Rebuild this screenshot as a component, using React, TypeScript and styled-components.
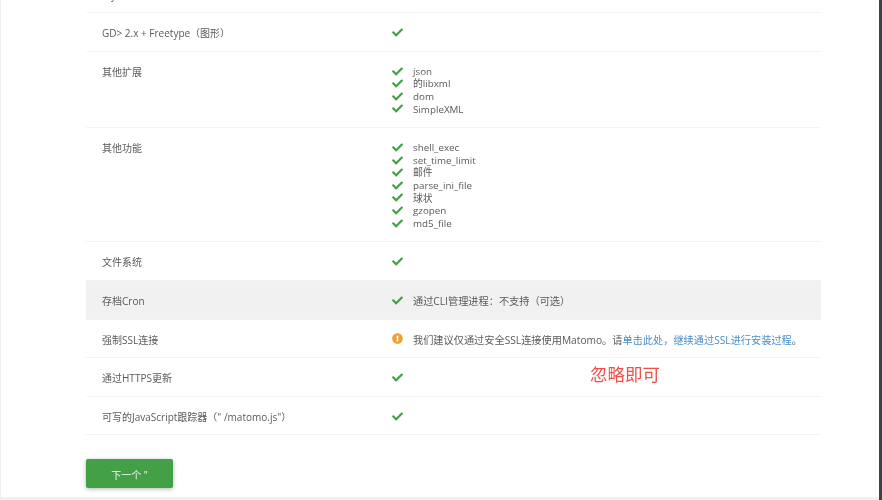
import * as React from 'react'
import styled, { createGlobalStyle } from 'styled-components'
import { FaCheck, FaExclamationCircle } from 'react-icons/fa'

const Global = createGlobalStyle`
  html, body {
    margin: 0;
    background: #fff;
    overflow: hidden;
  }
`

const Page = styled.div`
  height: 500px;
  display: flex;
  flex-direction: column;
  overflow: hidden;
  font-family: "Open Sans", "Noto Sans CJK SC", sans-serif;
  font-size: 10px;
  line-height: 12.6px;
  color: #5a5a5a;
  filter: blur(0.45px);
`

const Sheet = styled.div`
  flex: 1;
  min-height: 0;
  padding: 0 58px 0 85px;
  border-left: 1px solid #ececec;
  border-right: 3px solid #3c4347;
`

const Footer = styled.div`
  height: 3px;
  background: #f0f0f0;
  border-right: 3px solid #3c4347;
`

const Table = styled.div`
  position: relative;
  margin-top: -25.4px;
`

const Row = styled.div<{ $shaded?: boolean }>`
  display: grid;
  grid-template-columns: 306px 1fr;
  padding: 14px 0 11px;
  border-bottom: 1px solid #f3f3f3;
  background: ${(p) => (p.$shaded ? '#f1f1f1' : 'transparent')};
`

const Label = styled.div`
  padding-left: 16px;
`

const Items = styled.div`
  display: flex;
  flex-direction: column;
`

const Item = styled.div`
  display: flex;
  align-items: center;
  height: 12.6px;
`

const ItemText = styled.span<{ $prose?: boolean }>`
  font-size: ${(p) => (p.$prose ? '10.2px' : '9.8px')};
`

const IconCell = styled.span<{ $warn?: boolean }>`
  width: 21px;
  flex: none;
  display: flex;
  align-items: center;
  position: relative;
  top: -1px;
  color: ${(p) => (p.$warn ? '#f0a030' : '#43a047')};
  font-size: 11px;
`

const Link = styled.a`
  color: #4a8cc7;
  text-decoration: none;
`

const Note = styled.div`
  position: absolute;
  left: 504px;
  top: 388px;
  font-size: 17.5px;
  line-height: 22px;
  color: #f0504a;
`

const NextButton = styled.button`
  display: block;
  margin-top: 24px;
  width: 87px;
  height: 29px;
  padding: 3px 0 0;
  border: 0;
  border-radius: 2px;
  background: #43a047;
  color: #f1f8f1;
  font: inherit;
  box-shadow: 0 1px 4px rgba(0, 0, 0, 0.3);
`

type Entry = { text?: React.ReactNode; warn?: boolean; prose?: boolean }

const rows: { label: string; items: Entry[]; shaded?: boolean }[] = [
  { label: 'My 库/', items: [{}] },
  { label: 'GD> 2.x + Freetype（图形）', items: [{}] },
  {
    label: '其他扩展',
    items: [{ text: 'json' }, { text: '的libxml' }, { text: 'dom' }, { text: 'SimpleXML' }],
  },
  {
    label: '其他功能',
    items: [
      { text: 'shell_exec' },
      { text: 'set_time_limit' },
      { text: '邮件' },
      { text: 'parse_ini_file' },
      { text: '球状' },
      { text: 'gzopen' },
      { text: 'md5_file' },
    ],
  },
  { label: '文件系统', items: [{}] },
  { label: '存档Cron', items: [{ text: '通过CLI管理进程：不支持（可选）', prose: true }], shaded: true },
  {
    label: '强制SSL连接',
    items: [
      {
        warn: true,
        prose: true,
        text: (
          <>
            我们建议仅通过安全SSL连接使用Matomo。请<Link href="#">单击此处，继续通过SSL进行安装过程</Link>。
          </>
        ),
      },
    ],
  },
  { label: '通过HTTPS更新', items: [{}] },
  { label: '可写的JavaScript跟踪器（" /matomo.js"）', items: [{}] },
]

export default function App() {
  return (
    <Page>
      <Global />
      <Sheet>
        <Table>
          {rows.map((row) => (
            <Row key={row.label} $shaded={row.shaded}>
              <Label>{row.label}</Label>
              <Items>
                {row.items.map((item, i) => (
                  <Item key={i}>
                    <IconCell $warn={item.warn}>
                      {item.warn ? <FaExclamationCircle /> : <FaCheck />}
                    </IconCell>
                    <ItemText $prose={item.prose}>{item.text}</ItemText>
                  </Item>
                ))}
              </Items>
            </Row>
          ))}
          <Note>忽略即可</Note>
        </Table>
        <NextButton>下一个 "</NextButton>
      </Sheet>
      <Footer />
    </Page>
  )
}
